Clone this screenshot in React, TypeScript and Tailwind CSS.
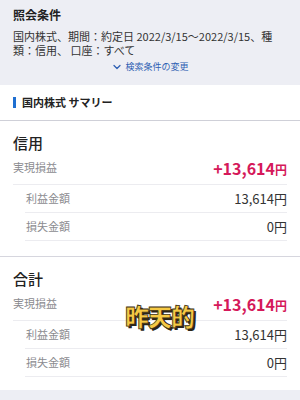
import { ChevronDown } from "lucide-react";

const font = { fontFamily: '"Noto Sans CJK JP", "Noto Sans", sans-serif' };

function SubRow({ label, value }: { label: string; value: string }) {
  return (
    <div className="ml-3 flex h-[28px] items-center justify-between border-b border-[#ececf0]">
      <span className="pl-[1px] text-[11px] text-[#8b8b90]">{label}</span>
      <span className="text-[13px] text-[#333]">{value}</span>
    </div>
  );
}

function Section({ title, last = false }: { title: string; last?: boolean }) {
  return (
    <div className={"px-[13px] pt-[11px] " + (last ? "pb-[13px]" : "pb-[15px] border-b border-[#d6d6de]")}>
      <div className="h-[22px] text-[15px] font-medium leading-[22px] text-[#222]">{title}</div>
      <div className="flex h-[31px] items-center justify-between border-b border-[#ececf0] pb-[3px]">
        <span className="text-[11px] text-[#8b8b90]">実現損益</span>
        <span className="text-[16px] font-bold text-[#d5195a]">
          +13,614<span className="text-[12px]">円</span>
        </span>
      </div>
      <SubRow label="利益金額" value="13,614円" />
      <SubRow label="損失金額" value="0円" />
    </div>
  );
}

export default function App() {
  return (
    <div className="relative h-[400px] w-[300px] overflow-hidden bg-[#edeef4]" style={font}>
      <div className="px-[13px] pt-[6px]">
        <div className="text-[12px] font-bold leading-[18px] text-[#222]">照会条件</div>
        <div className="mt-[5px] text-[11px] leading-[14px] text-[#333]">
          国内株式、期間：約定日 2022/3/15〜2022/3/15、種
          <br />
          類：信用、 口座：すべて
        </div>
        <div className="mt-[3px] flex items-center justify-center gap-[2px] text-[9px] leading-[14px] text-[#2d5fb3]">
          <ChevronDown size={12} strokeWidth={2.5} />
          <span>検索条件の変更</span>
        </div>
      </div>

      <div className="mt-[11px] bg-white">
        <div className="flex h-[36px] items-center gap-[6px] border-b border-[#cfd0d8] px-[13px]">
          <div className="h-[11px] w-[3px] bg-[#1f6fd1]" />
          <span className="text-[11px] font-bold text-[#222]">国内株式 サマリー</span>
        </div>
        <Section title="信用" />
        <Section title="合計" last />
      </div>

      <div className="absolute left-[125px] top-[304px] text-[24px] font-black leading-none tracking-[-1px] text-[#f6c944] [-webkit-text-stroke:0.8px_#3b2e14] [text-shadow:2px_2px_0_#2a2418]">
        昨天的
      </div>
    </div>
  );
}
